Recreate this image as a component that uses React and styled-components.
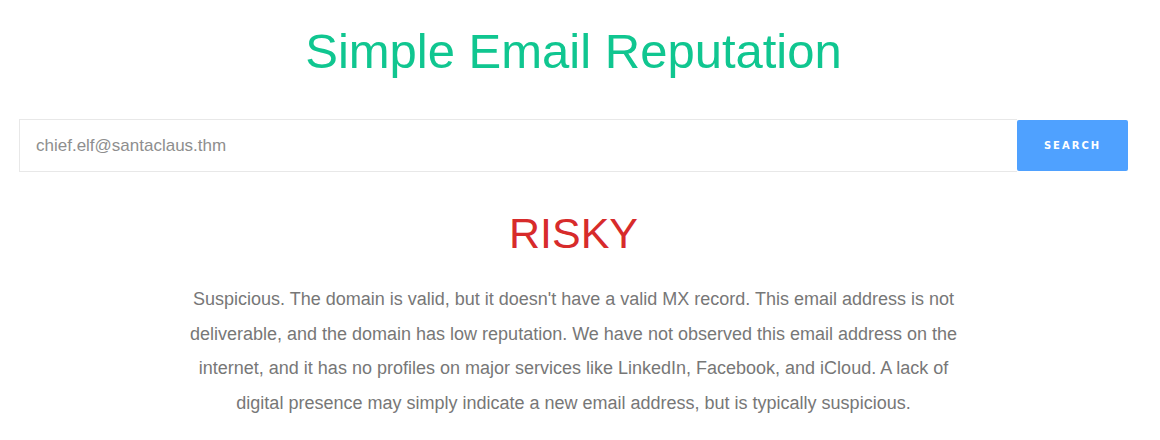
import React from 'react'
import styled, { createGlobalStyle } from 'styled-components'

const GlobalStyle = createGlobalStyle`
  body {
    margin: 0;
    background: #fff;
    font-family: "Liberation Sans", Arial, sans-serif;
  }
`

const Page = styled.div`
  padding: 0 32px 0 19px;
  display: flex;
  flex-direction: column;
  align-items: center;
`

const Title = styled.h1`
  margin: 23px 0 0;
  font-size: 49px;
  font-weight: 400;
  color: #10c690;
  line-height: 56px;
`

const SearchForm = styled.form`
  margin-top: 40px;
  display: flex;
  align-items: center;
  width: 100%;
`

const EmailInput = styled.input`
  flex: 1;
  height: 53px;
  box-sizing: border-box;
  border: 1px solid #e8e8e8;
  border-right: none;
  padding: 0 16px;
  font-family: inherit;
  font-size: 17px;
  color: #777;
  outline: none;
  &::placeholder {
    color: #8e8e8e;
  }
`

const SearchButton = styled.button`
  width: 111px;
  height: 51px;
  border: none;
  border-radius: 2px;
  background: #4fa1ff;
  color: #fff;
  font-family: "DejaVu Sans", sans-serif;
  font-size: 10px;
  font-weight: 700;
  letter-spacing: 2px;
  cursor: pointer;
`

const Verdict = styled.h2`
  margin: 37px 0 0;
  font-size: 43px;
  font-weight: 400;
  color: #d72b2b;
  line-height: 48px;
`

const Description = styled.p`
  margin: 25px 0 0;
  max-width: 780px;
  text-align: center;
  font-size: 18px;
  line-height: 34.6px;
  color: #777;
`

export default function App() {
  return (
    <>
      <GlobalStyle />
      <Page>
        <Title>Simple Email Reputation</Title>
        <SearchForm onSubmit={e => e.preventDefault()}>
          <EmailInput placeholder="chief.elf@santaclaus.thm" />
          <SearchButton type="submit">SEARCH</SearchButton>
        </SearchForm>
        <Verdict>RISKY</Verdict>
        <Description>
          Suspicious. The domain is valid, but it doesn't have a valid MX record. This email address is not
          deliverable, and the domain has low reputation. We have not observed this email address on the
          internet, and it has no profiles on major services like LinkedIn, Facebook, and iCloud. A lack of
          digital presence may simply indicate a new email address, but is typically suspicious.
        </Description>
      </Page>
    </>
  )
}
